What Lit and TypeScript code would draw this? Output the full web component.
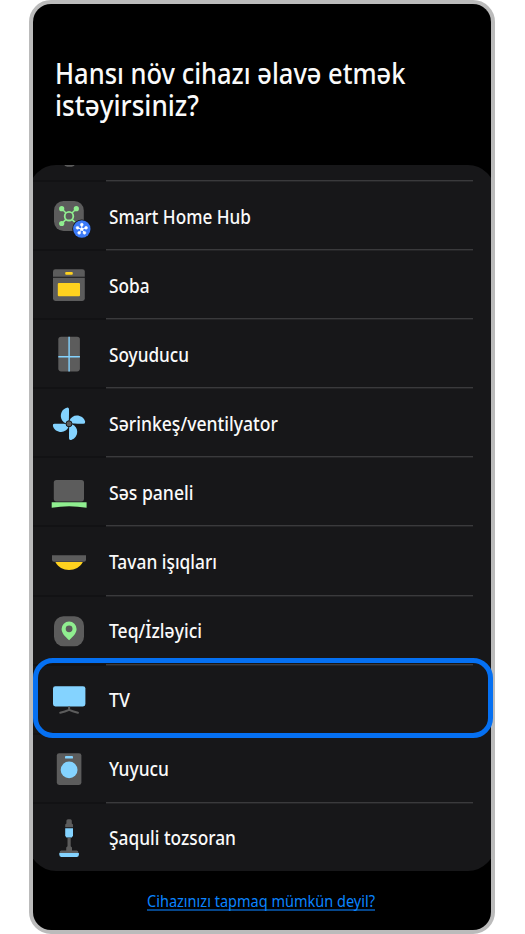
import { LitElement, html, svg, css, TemplateResult } from "lit";
import { customElement, property } from "lit/decorators.js";

interface Device {
  label: string;
  width: number;
  icon: TemplateResult;
}

interface Line {
  text: string;
  width: number;
}

const GREY = "#5c5c5c";
const BLUE = "#84d3ff";
const GREEN = "#90ee90";
const YELLOW = "#ffd21f";

const badgeAngles = [-90, -18, 54, 126, 198];
const point = (deg: number, r: number) => ({
  x: Math.cos((deg * Math.PI) / 180) * r,
  y: Math.sin((deg * Math.PI) / 180) * r,
});

const blade = "M-0.2 -3.2C0 -6 0 -11 0 -14.5Q0 -16.6 -2.2 -16.1C-6 -15.2 -8.2 -11.5 -8.2 -7.8C-8.2 -4.6 -6.2 -1.6 -3 -0.4Z";

const devices: Device[] = [
  {
    label: "Smart Home Hub",
    width: 142,
    icon: svg`
      <rect x="-15" y="-15" width="29.8" height="30" rx="9.5" fill=${GREY} />
      <g stroke=${GREEN} stroke-width="1.5" fill="none">
        <path d="M-7 -7L-3 -3M7 -7L3 -3M-7 7.4L-3 3.4M3 3.4L6 6.4" />
        <circle cx="0" cy="0.2" r="4.3" stroke-width="1.8" />
      </g>
      <g fill=${GREEN}>
        <circle cx="-7.3" cy="-7.3" r="2.6" />
        <circle cx="7.3" cy="-7.3" r="2.6" />
        <circle cx="-7.3" cy="7.5" r="2.6" />
      </g>
      <circle cx="12.8" cy="13" r="9.6" fill="#171719" />
      <circle cx="12.8" cy="13" r="8.7" fill="#3b7af7" />
      <g transform="translate(12.8 13.2)" stroke="#fff" stroke-width="1" fill="#fff">
        ${badgeAngles.map((a) => {
          const p = point(a, 4.5);
          return svg`<path d="M0 0L${p.x} ${p.y}" /><circle cx=${p.x} cy=${p.y} r="1.4" stroke-width="0.6" />`;
        })}
        <circle r="1.5" stroke="none" />
      </g>`,
  },
  {
    label: "Soba",
    width: 40.5,
    icon: svg`
      <path d="M-16 -8.3V-13.4Q-16 -15.8 -13.6 -15.8H13.4Q15.8 -15.8 15.8 -13.4V-8.3Z" fill=${GREY} />
      <path d="M-16 -7.2H15.8V13.6Q15.8 16 13.4 16H-13.6Q-16 16 -16 13.6Z" fill=${GREY} />
      <rect x="-3.8" y="-13" width="7.6" height="2.8" rx="1" fill=${YELLOW} />
      <rect x="-11.2" y="-2" width="22.2" height="13.2" rx="1" fill=${YELLOW} />`,
  },
  {
    label: "Soyuducu",
    width: 80,
    icon: svg`
      <rect x="-10.7" y="-17.2" width="21.6" height="34.6" rx="2.8" fill=${GREY} />
      <path d="M0.1 -17.2V17.4M-10.7 2.7H10.9" stroke=${BLUE} stroke-width="1.4" />`,
  },
  {
    label: "Sərinkeş/ventilyator",
    width: 169,
    icon: svg`
      <g transform="translate(0 -0.2)">
        ${[0, 90, 180, 270].map((a) => svg`<path d=${blade} fill=${BLUE} transform="rotate(${a})" />`)}
        <circle r="3" fill=${GREY} stroke="#171719" stroke-width="1" />
      </g>`,
  },
  {
    label: "Səs paneli",
    width: 84.5,
    icon: svg`
      <rect x="-15.2" y="-13" width="30.2" height="21.4" rx="2.6" fill=${GREY} />
      <path d="M-17.3 9.2H17.6V14.8Q0 11.6 -17.3 14.8Z" fill=${GREEN} />`,
  },
  {
    label: "Tavan işıqları",
    width: 108,
    icon: svg`
      <path d="M-13.6 0H13.8C11 5.4 6 7.9 0 7.9S-10.8 5.4 -13.6 0Z" fill=${YELLOW} />
      <path d="M-17 -6.7H17V-2.2Q17 -0.2 15 -0.2H-15Q-17 -0.2 -17 -2.2Z" fill=${GREY} />`,
  },
  {
    label: "Teq/İzləyici",
    width: 93,
    icon: svg`
      <rect x="-15" y="-14.8" width="30" height="30" rx="9.5" fill=${GREY} />
      <path fill-rule="evenodd" fill=${GREEN}
        d="M0.1 -9.4A7.5 7.5 0 0 1 7.6 -1.9C7.6 2 4.5 5.5 0.1 9.2C-4.3 5.5 -7.4 2 -7.4 -1.9A7.5 7.5 0 0 1 0.1 -9.4ZM0.1 -5.6A3.4 3.4 0 1 0 0.1 1.2A3.4 3.4 0 1 0 0.1 -5.6Z" />`,
  },
  {
    label: "TV",
    width: 21,
    icon: svg`
      <rect x="-16" y="-13.8" width="32.4" height="20.3" rx="2.4" fill=${BLUE} />
      <path d="M0.1 7V10M-8.8 12.8Q-4 11.7 0.1 9.9Q4.5 11.7 9 12.8" fill="none" stroke=${GREY} stroke-width="2" stroke-linecap="round" stroke-linejoin="round" />`,
  },
  {
    label: "Yuyucu",
    width: 60,
    icon: svg`
      <rect x="-12.2" y="-15.8" width="24.6" height="31.8" rx="2.4" fill=${GREY} />
      <rect x="-4" y="-13" width="8" height="2.6" rx="0.9" fill=${BLUE} />
      <circle cx="0.1" cy="0.9" r="8.4" fill=${BLUE} />`,
  },
  {
    label: "Şaquli tozsoran",
    width: 127,
    icon: svg`
      <path d="M-2.6 -17V-17.2Q-2.6 -18.7 -1 -18.7H1.2Q2.8 -18.7 2.8 -17.2V-14.6L4 -13.6V-10.8H-3.8V-13.6L-2.6 -14.6Z" fill=${GREY} />
      <path d="M-3.8 -9.8H4V-2.2L2.8 -0.6H-2.6L-3.8 -2.2Z" fill=${BLUE} />
      <path d="M-1.5 0H1.7V8.2L3 9.6V12.6H7.6Q9.2 12.6 9.5 15H-9.5Q-9.2 12.6 -7.6 12.6H-2.8V9.6L-1.5 8.2Z" fill=${GREY} />
      <path d="M-9.7 15H9.9V16.6Q9.9 18.9 8 18.9H-7.8Q-9.7 18.9 -9.7 16.6Z" fill=${BLUE} />`,
  },
];

const titleLines: Line[] = [
  { text: "Hansı növ cihazı əlavə etmək", width: 350.5 },
  { text: "istəyirsiniz?", width: 144 },
];

@customElement("fitted-text")
class FittedText extends LitElement {
  @property({ attribute: false }) lines: Line[] = [];
  @property({ type: Number }) size = 20;
  @property({ type: Number }) leading = 32;

  static styles = css`
    :host { display: block; line-height: 0; }
    .canvas { display: block; overflow: visible; }
    .text { fill: currentColor; }
  `;

  render() {
    const width = Math.max(0, ...this.lines.map((l) => l.width));
    return html`<svg class="canvas" width=${width} height=${20 + (this.lines.length - 1) * this.leading}>
      <text class="text" font-size=${this.size}>${this.lines.map(
        (line, i) => svg`<tspan x="0" y=${16 + i * this.leading} textLength=${line.width} lengthAdjust="spacingAndGlyphs">${line.text}</tspan>`
      )}</text>
    </svg>`;
  }
}

@customElement("app-root")
class AppRoot extends LitElement {
  static styles = css`
    :host {
      display: block;
      height: 934px;
      background: #fff;
      font-family: "Noto Sans", "Open Sans", sans-serif;
      font-weight: 500;
    }
    .phone {
      box-sizing: border-box;
      width: 466px;
      height: 934px;
      margin-left: 29px;
      border: 4px solid #bbb;
      border-radius: 22px;
      background: #bbb;
      position: relative;
    }
    .screen {
      height: 100%;
      border-radius: 18px;
      background: #000;
      color: #fafafa;
      display: flex;
      flex-direction: column;
      overflow: hidden;
    }
    .heading {
      height: 161px;
      flex: none;
      box-sizing: border-box;
      margin: 0;
      padding: 63.6px 0 0 22px;
      font-weight: 500;
    }
    .panel {
      flex: none;
      height: 706px;
      box-sizing: border-box;
      margin: 0 -4px;
      padding: 0 4px;
      border-radius: 27px;
      background: #171719;
      overflow: hidden;
    }
    .previous { height: 15px; }
    .remnant { display: block; margin-left: 31px; }
    .row {
      height: 69.1px;
      display: grid;
      grid-template-columns: 73px 1fr;
    }
    .side {
      padding: 12.3px 0 0 12.4px;
      background: linear-gradient(#121214, #121214) 0 0 / 100% 2px no-repeat;
    }
    .icon { display: block; width: 48px; height: 48px; overflow: visible; }
    .body {
      margin-right: 18px;
      padding: 27.6px 0 0 2.6px;
      background: linear-gradient(#3a3a3c 50%, #242426 50%) 0 0 / 100% 2px no-repeat;
    }
    .focus {
      position: absolute;
      box-sizing: border-box;
      top: 654px;
      left: 0;
      width: 460px;
      height: 80px;
      border: 5px solid #0570f2;
      border-radius: 20px;
    }
    .footer {
      flex: 1;
      display: flex;
      justify-content: center;
      padding-top: 20px;
      color: #0a84ff;
      font-weight: 400;
    }
    .link { border-bottom: 2px solid #06468a; height: 18px; color: inherit; margin-right: 2px; }
  `;

  renderDevice(device: Device) {
    return html`<div class="row">
      <div class="side"><svg class="icon" viewBox="-24 -24 48 48">${device.icon}</svg></div>
      <div class="body"><fitted-text .lines=${[{ text: device.label, width: device.width }]}></fitted-text></div>
    </div>`;
  }

  render() {
    return html`<main class="phone">
      <div class="screen">
        <h1 class="heading"><fitted-text .lines=${titleLines} .size=${28.5}></fitted-text></h1>
        <section class="panel">
          <div class="previous">
            <svg class="remnant" width="12" height="3"><ellipse cx="5.5" cy="0" rx="5" ry="1.8" fill=${GREY} /></svg>
          </div>
          ${devices.map((d) => this.renderDevice(d))}
        </section>
        <footer class="footer">
          <a class="link"><fitted-text .lines=${[{ text: "Cihazınızı tapmaq mümkün deyil?", width: 228 }]} .size=${15.5}></fitted-text></a>
        </footer>
      </div>
      <div class="focus"></div>
    </main>`;
  }
}
